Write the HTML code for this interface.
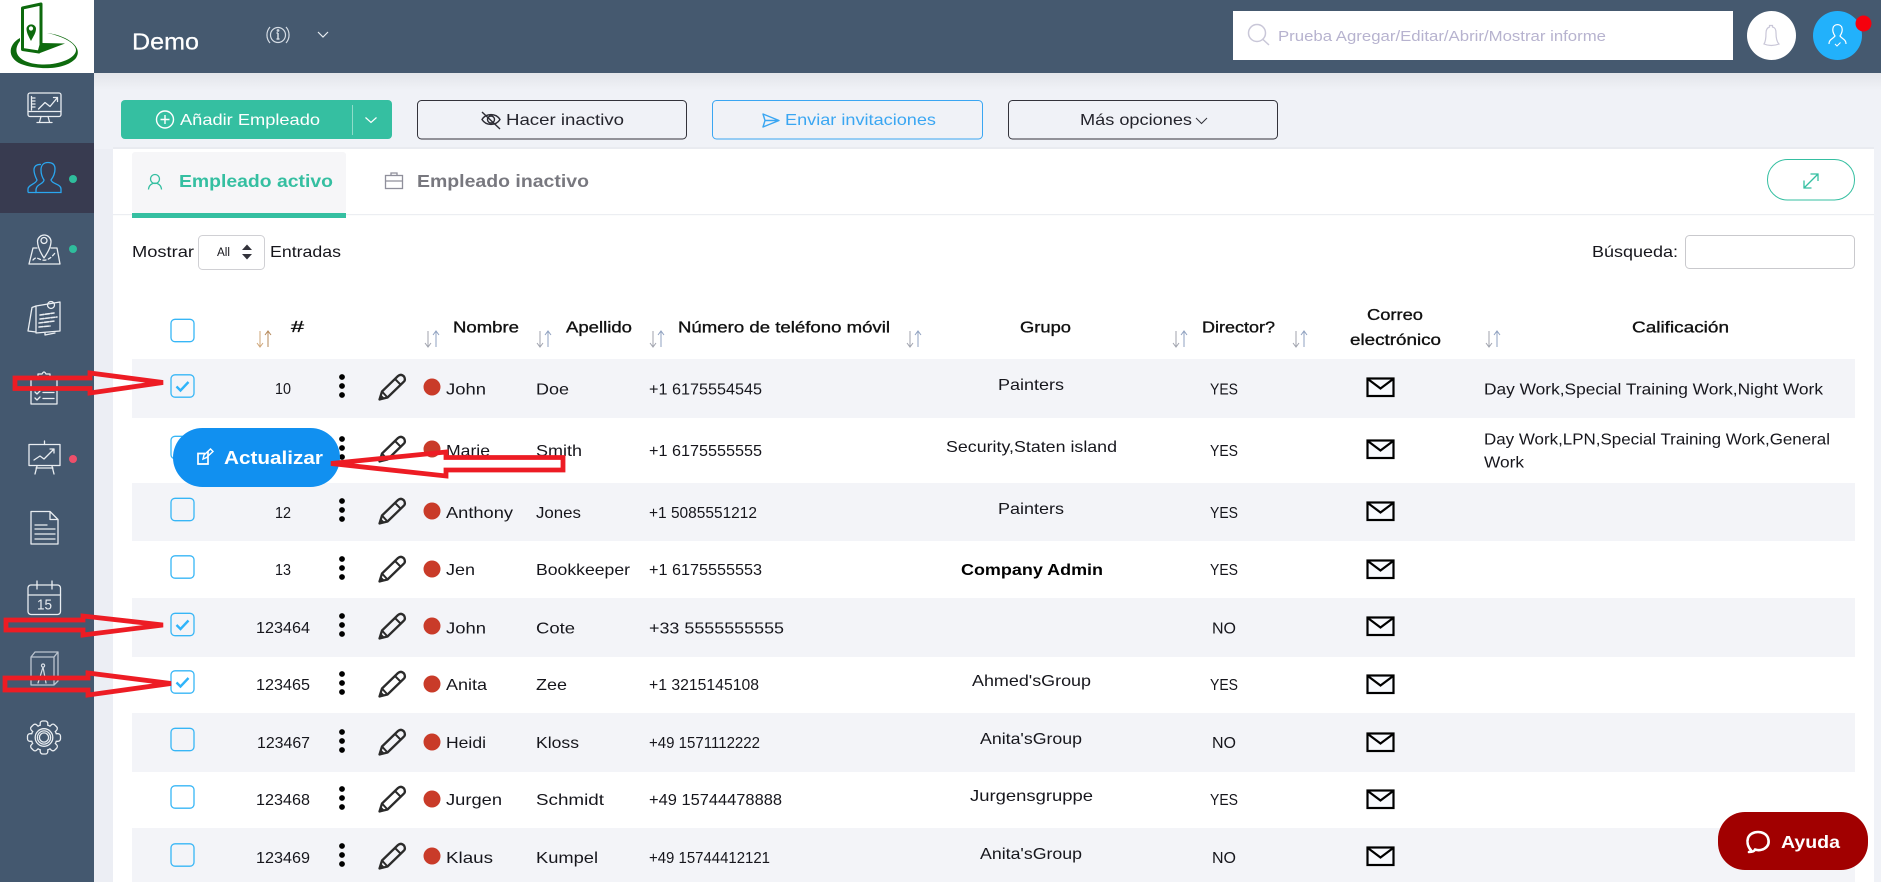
<!DOCTYPE html>
<html lang="es"><head><meta charset="utf-8"><title>Empleados</title>
<style>
html,body{margin:0;padding:0;width:1881px;height:882px;overflow:hidden;background:#f0f2f7}
svg{display:block}
text{font-family:"Liberation Sans",sans-serif;font-size:16px;fill:#16161c}
.h{stroke:#111;stroke-width:.35px;fill:#111}
.ic{fill:none;stroke:#e9edf1;stroke-width:1.3;stroke-linejoin:round;stroke-linecap:round}
.ar{fill:none;stroke:#ed1c24;stroke-width:4.800;stroke-linejoin:miter}
</style></head><body>
<svg width="1881" height="882" viewBox="0 0 1881 882" xmlns="http://www.w3.org/2000/svg">
<defs>
<linearGradient id="sh" x1="0" y1="0" x2="0" y2="1"><stop offset="0" stop-color="#e3e5ea"/><stop offset="1" stop-color="#f0f2f7"/></linearGradient>
<g id="sort" fill="none" stroke-width="1"><path d="M-4,-8V8M-7,4L-4,8L-1,4" stroke="#a0a3ae"/><path d="M4,8V-8M1,-4L4,-8L7,-4" stroke="#8fa1c0"/></g>
<g id="sort1" fill="none" stroke-width="1"><path d="M-4,-8V8M-7,4L-4,8L-1,4" stroke="#cfa77a"/><path d="M4,8V-8M1,-4L4,-8L7,-4" stroke="#b5885a"/></g>
<g id="menu" fill="#000"><circle cy="-9" r="2.900"/><circle r="2.900"/><circle cy="9" r="2.900"/></g>
<g id="pen"><path d="M-12.500,12.500L-10,4.500L6,-11Q9,-13.500 12,-10.500Q14,-7 11.500,-5L-4.500,10.500Z" fill="none" stroke="#2b2b2b" stroke-width="2.300" stroke-linejoin="round"/><path d="M3,-8L8.500,-2.500M-10,4.500L-4.500,10.500" stroke="#2b2b2b" stroke-width="2" fill="none"/><path d="M-12.500,12.500L-11,7.500L-7.500,11Z" fill="#2b2b2b"/></g>
<g id="mail"><rect x="-13" y="-8.500" width="26" height="17.500" fill="#f8fafe" stroke="#000" stroke-width="2.200"/><path d="M-12,-7.500L0,1.500L12,-7.500" fill="none" stroke="#000" stroke-width="2.200"/></g>
<circle id="rd" r="8.500" fill="#c93b29"/>
<rect id="cb" x="-11.500" y="-11.200" width="23" height="22.400" rx="4" fill="none" stroke="#37b6f6" stroke-width="1.300"/>
<path id="ck" d="M-6,0.500L-2,4.500L6,-4" fill="none" stroke="#2fb4fa" stroke-width="2.400"/>
</defs>

<!-- background -->
<rect width="1881" height="882" fill="#f0f2f7"/>
<rect x="94" y="73" width="1787" height="18" fill="url(#sh)"/>
<rect x="94" y="149" width="19" height="733" fill="#eceef4"/>
<rect x="113" y="149" width="1761" height="733" fill="#fff"/>
<rect x="113" y="147" width="1761" height="2" fill="#e9ebf0"/>

<!-- topbar -->
<rect width="1881" height="73" fill="#45596f"/>
<rect width="94" height="73" fill="#fff"/>
<!-- logo -->
<g>
<path d="M20,38C7,45 7,60 24,65C40,70 66,70 76,58C84,47 66,35 47,33C62,36 76,43 76,50C76,58 60,64.500 44,64.500C22,64.500 10,54 20,41Z" fill="#0d6a0d"/>
<path d="M22.500,8L41,4V45L39,52L22.500,49.500Z" fill="#fff" stroke="#0d6a0d" stroke-width="3" stroke-linejoin="round"/>
<path d="M31,41C28.500,36 26.500,33 26.500,28.500A4.800,4.800 0 0 1 36,28.500C36,33 33.500,36 31,41Z" fill="#0d6a0d"/><circle cx="31" cy="28.500" r="2.100" fill="#fff"/>
<path d="M42,43L65,43.500L40,53Z" fill="#0d6a0d"/>
</g>
<text x="132" y="49.500" textLength="67" lengthAdjust="spacingAndGlyphs" style="font-size:23px;fill:#fff;stroke:#fff;stroke-width:.25px">Demo</text>
<g fill="none" stroke="#d5dce4" stroke-width="1.200"><circle cx="278" cy="35" r="7.500"/><path d="M270,27A12,12 0 0 0 270,43M286,27A12,12 0 0 1 286,43"/><path d="M278,33V39M276.500,39H279.500M276.500,33H278" stroke-width="1.500"/><circle cx="278" cy="30.500" r=".8"/></g>
<path d="M318,32L323,37L328,32" fill="none" stroke="#e8edf2" stroke-width="1.200"/>
<rect x="1233" y="11" width="500" height="49" fill="#fff"/>
<circle cx="1257" cy="33" r="8.500" fill="none" stroke="#c9c7d8" stroke-width="1.500"/><path d="M1263,39.500L1269,45" stroke="#c9c7d8" stroke-width="1.500"/>
<text x="1278" y="41" textLength="328" lengthAdjust="spacingAndGlyphs" style="font-size:15px;fill:#b7b3cf">Prueba Agregar/Editar/Abrir/Mostrar informe</text>
<circle cx="1771.500" cy="35.500" r="24.500" fill="#fff"/>
<path d="M1764,44C1766,41 1766,36 1766,33C1766,29 1768,27.500 1769.500,27V25.500H1772.500V27C1775,27.500 1776,29 1776,33C1776,36 1776,41 1779,44Q1771,47 1764,44Z" fill="none" stroke="#c9c7d8" stroke-width="1.200"/>
<circle cx="1837.500" cy="35.500" r="24.500" fill="#22b1fb"/>
<path d="M1829,44C1829,39 1833,39 1835,36C1833,33 1832.500,30 1833,28C1834,23.500 1841,23.500 1842,28C1842.500,30 1842,33 1840,36C1842,39 1846,39 1846,44" fill="none" stroke="#fff" stroke-width="1.200"/><path d="M1835,44L1837,46L1840.500,42.500" fill="none" stroke="#fff" stroke-width="1"/>
<circle cx="1863.500" cy="23.500" r="8" fill="#f6000d"/>

<!-- sidebar -->
<rect y="73" width="94" height="809" fill="#44586f"/>
<rect y="143" width="94" height="70" fill="#383b50"/>
<g class="ic">
<!-- monitor -->
<rect x="28" y="93" width="33" height="23.500" rx="2"/><path d="M28,111.500H61M41,116.500L39.500,122M48,116.500L49.500,122M37,122.500H52"/><path d="M38.500,109L45,102.500L50,106.500L57.500,97.500M53.500,97.500H57.500V101.500"/><path d="M31.500,96.500V110M31.500,98H35M31.500,101H35M31.500,104H35M31.500,107H35" stroke-width="1.300"/>
<!-- map -->
<path d="M33,248L29,264H60L57,248H51M37,248H33"/><path d="M44,258C40,252 37.500,247 37.500,241A6.800,6.800 0 0 1 51,241C51,247 48,252 44,258Z"/><circle cx="44" cy="240.500" r="3"/><path d="M33,260C36,256 38,259 42,260C47,261 51,258 55,253" stroke-dasharray="3 2.500"/>
<!-- notes -->
<path d="M32,307.500L28,331L36,332L36,306ZM36,306L60,302L60,331L36,333Z"/><path d="M40,315L54,313M40,319L57,317M39,323L55,321M39,327L50,326" stroke-dasharray="4 1.500" stroke-width="1.600"/><circle cx="51" cy="305" r="3.500"/><path d="M45,333L45,335L55,333"/>
<!-- clipboard -->
<path d="M37,377H31V404H57V377H51"/><path d="M38,378V374H42Q44,370 46,374H50V378Z"/><path d="M35,392L37,394L40,391M35,398L37,400L40,397M43,392.500H54M43,398.500H54"/>
<!-- presentation -->
<rect x="29" y="444.500" width="31" height="21"/><path d="M44.500,441V444.500M37,466L35,474M52,466L54,474M36,468H53M34,460L40,456L44,459L54,449M50,449H54V453"/>
<!-- doc -->
<path d="M31,511.500H50L58,519.500V544H31ZM50,511.500V519.500H58"/><path d="M35,525H47M35,529H55M35,534H55M35,539H55"/>
<!-- calendar -->
<rect x="28" y="585" width="32.500" height="29.500" rx="3"/><path d="M28,595H60.500M37,581V589M52,581V589"/>
<!-- book -->
<path d="M31,657L35,652H58V681L54,685H31ZM31,657H54V685M54,657L58,652" stroke="#bcc5cf"/><path d="M43,664A1.600,1.600 0 1 0 43.100,664M43,667L40,677L38,683M43,667L46,683" stroke="#d8dee5" stroke-width="1.200"/>
</g>
<text x="37" y="609.500" textLength="15" lengthAdjust="spacingAndGlyphs" style="font-size:15px;fill:#e9edf1">15</text>
<!-- gear -->
<g transform="translate(44,737.500)" fill="none" stroke="#e9edf1" stroke-width="1.300">
<circle r="12.800"/>
<g fill="#44586f"><rect x="-16.500" y="-3.800" width="33" height="7.600" rx="2.500"/><rect x="-16.500" y="-3.800" width="33" height="7.600" rx="2.500" transform="rotate(45)"/><rect x="-16.500" y="-3.800" width="33" height="7.600" rx="2.500" transform="rotate(90)"/><rect x="-16.500" y="-3.800" width="33" height="7.600" rx="2.500" transform="rotate(135)"/></g>
<circle r="12.200" fill="#44586f" stroke="none"/>
<circle r="8.800"/><circle r="6.600"/><circle r="4.600"/>
</g>
<!-- people -->
<g fill="none" stroke="#2aa6ef" stroke-width="1.300"><path d="M36,192.500H61V189C61,184 52,184 51,180C54,176 55,172 55,169C55,164 52,162.500 48,162.500C43,162.500 41,166 41,170C41,174 42,177 44,180C44,184 36,184 36,190Z"/><path d="M28,192.500V189C28,185 36,184 37,180C35,176 34,173 34,170C34,166 37,164 41,164.500M28,192.500H36"/></g>
<circle cx="73" cy="179" r="4" fill="#2fbd9c"/><circle cx="73" cy="249" r="4" fill="#2fbd9c"/><circle cx="73" cy="459" r="4" fill="#ee4f6a"/>

<!-- action buttons -->
<rect x="121" y="100" width="271" height="39" rx="4" fill="#35bfa1"/>
<circle cx="165" cy="119.500" r="8.500" fill="none" stroke="#fff" stroke-width="1.400"/><path d="M165,115V124M160.500,119.500H169.500" stroke="#fff" stroke-width="1.400"/>
<text x="180" y="125" textLength="140" lengthAdjust="spacingAndGlyphs" style="fill:#fff">Añadir Empleado</text>
<rect x="352" y="105" width="1" height="30" fill="#8fdcc9"/>
<path d="M365.500,117.500L371,122.500L376.500,117.500" fill="none" stroke="#fff" stroke-width="1.200"/>
<rect x="417.500" y="100.500" width="269" height="38.500" rx="4" fill="none" stroke="#33333b" stroke-width="1"/>
<path d="M482,119.500C486,113 496,113 500,119.500C496,126 486,126 482,119.500Z" fill="none" stroke="#2c2c34" stroke-width="1.400"/><circle cx="491" cy="119.500" r="3.500" fill="none" stroke="#2c2c34" stroke-width="1.400"/><path d="M482,112L500,129" stroke="#2c2c34" stroke-width="1.400"/>
<text x="506" y="125" textLength="118" lengthAdjust="spacingAndGlyphs" style="fill:#24242c">Hacer inactivo</text>
<rect x="712.500" y="100.500" width="270" height="38.500" rx="4" fill="none" stroke="#3aa6f2" stroke-width="1"/>
<path d="M763,114L779,120.500L763,127L765,120.500Z M765,120.500H779" fill="none" stroke="#3aa6f2" stroke-width="1.400" stroke-linejoin="round"/>
<text x="785" y="125" textLength="151" lengthAdjust="spacingAndGlyphs" style="fill:#3aa6f2">Enviar invitaciones</text>
<rect x="1008.500" y="100.500" width="269" height="38.500" rx="4" fill="none" stroke="#33333b" stroke-width="1"/>
<text x="1080" y="125" textLength="112" lengthAdjust="spacingAndGlyphs" style="fill:#24242c">Más opciones</text>
<path d="M1196,118L1201.500,123.500L1207,118" fill="none" stroke="#33333b" stroke-width="1"/>

<!-- tabs -->
<rect x="113" y="214" width="1761" height="1.200" fill="#eceef2"/>
<rect x="132" y="152" width="214" height="61" rx="3" fill="#f6f6f8"/>
<rect x="132" y="213" width="214" height="5" fill="#35bfa1"/>
<g fill="none" stroke="#35bfa1" stroke-width="1.300"><circle cx="155" cy="179" r="4.500"/><path d="M148.500,189.500C149,181 161,181 161.500,189.500"/></g>
<text x="179" y="187" textLength="154" lengthAdjust="spacingAndGlyphs" style="font-weight:bold;font-size:17.500px;fill:#35bfa1">Empleado activo</text>
<g fill="none" stroke="#8f8f9b" stroke-width="1.300"><rect x="385.500" y="175.500" width="17" height="13"/><path d="M385.500,181H402.500M391,175.500V173H397V175.500"/></g>
<text x="417" y="187" textLength="172" lengthAdjust="spacingAndGlyphs" style="font-weight:bold;font-size:17.500px;fill:#78787f">Empleado inactivo</text>
<rect x="1767.500" y="159.500" width="87" height="40.500" rx="20" fill="#fff" stroke="#35bfa1" stroke-width="1"/>
<path d="M1804,188L1818,174M1810.500,174H1818V181M1804,180.500V188H1811.500" fill="none" stroke="#35bfa1" stroke-width="1.300"/>

<text x="132" y="257" textLength="62" lengthAdjust="spacingAndGlyphs">Mostrar</text>
<rect x="198.500" y="235.500" width="66" height="34" rx="4" fill="#fff" stroke="#d0d0d4" stroke-width="1"/>
<text x="217" y="256" textLength="13" lengthAdjust="spacingAndGlyphs" style="font-size:11.500px">All</text>
<path d="M242,250L247,244.500L252,250ZM242,254L247,259.500L252,254Z" fill="#33333b"/>
<text x="270" y="257" textLength="71" lengthAdjust="spacingAndGlyphs">Entradas</text>
<text x="1592" y="257" textLength="86" lengthAdjust="spacingAndGlyphs">Búsqueda:</text>
<rect x="1685.500" y="235.500" width="169" height="33" rx="4" fill="#fff" stroke="#c9c9cd" stroke-width="1"/>

<!-- table head -->
<use href="#cb" x="182.500" y="330.500"/>
<use href="#sort1" x="264" y="339"/><use href="#sort" x="432" y="339"/><use href="#sort" x="544" y="339"/><use href="#sort" x="657" y="339"/><use href="#sort" x="914" y="339"/><use href="#sort" x="1180" y="339"/><use href="#sort" x="1300" y="339"/><use href="#sort" x="1493" y="339"/>
<text class="h" x="291" y="332" textLength="13" lengthAdjust="spacingAndGlyphs">#</text>
<text class="h" x="453" y="332.500" textLength="66" lengthAdjust="spacingAndGlyphs">Nombre</text>
<text class="h" x="566" y="332.500" textLength="66" lengthAdjust="spacingAndGlyphs">Apellido</text>
<text class="h" x="678" y="332.500" textLength="212" lengthAdjust="spacingAndGlyphs">Número de teléfono móvil</text>
<text class="h" x="1020" y="332.500" textLength="51" lengthAdjust="spacingAndGlyphs">Grupo</text>
<text class="h" x="1202" y="332.500" textLength="73" lengthAdjust="spacingAndGlyphs">Director?</text>
<text class="h" x="1367" y="320" textLength="56" lengthAdjust="spacingAndGlyphs">Correo</text>
<text class="h" x="1350" y="345" textLength="91" lengthAdjust="spacingAndGlyphs">electrónico</text>
<text class="h" x="1632" y="332.500" textLength="97" lengthAdjust="spacingAndGlyphs">Calificación</text>

<!-- row backgrounds -->
<g fill="#f3f4f8"><rect x="132" y="359" width="1723" height="59"/><rect x="132" y="483" width="1723" height="58"/><rect x="132" y="598" width="1723" height="59"/><rect x="132" y="713" width="1723" height="59"/><rect x="132" y="828" width="1723" height="54"/></g>

<!-- rows -->
<use href="#cb" x="182.500" y="386"/><use href="#ck" x="182.500" y="386"/>
<text x="275" y="394" textLength="16" lengthAdjust="spacingAndGlyphs">10</text>
<use href="#menu" x="342" y="386"/><use href="#pen" x="392" y="387"/><use href="#rd" x="432" y="387"/>
<text x="446" y="394.500" textLength="40" lengthAdjust="spacingAndGlyphs">John</text>
<text x="536" y="394.500" textLength="33" lengthAdjust="spacingAndGlyphs">Doe</text>
<text x="649" y="394.500" textLength="113" lengthAdjust="spacingAndGlyphs">+1 6175554545</text>
<text x="998" y="390" textLength="66" lengthAdjust="spacingAndGlyphs">Painters</text>
<text x="1210" y="394.500" textLength="28" lengthAdjust="spacingAndGlyphs">YES</text>
<use href="#mail" x="1380.500" y="387"/>
<text x="1484" y="394.500" textLength="339" lengthAdjust="spacingAndGlyphs">Day Work,Special Training Work,Night Work</text>

<use href="#cb" x="182.500" y="447.500"/>
<text x="275" y="456" textLength="16" lengthAdjust="spacingAndGlyphs">11</text>
<use href="#menu" x="342" y="448"/><use href="#pen" x="392" y="449"/><use href="#rd" x="432" y="449"/>
<text x="446" y="456" textLength="44" lengthAdjust="spacingAndGlyphs">Marie</text>
<text x="536" y="456" textLength="46" lengthAdjust="spacingAndGlyphs">Smith</text>
<text x="649" y="456" textLength="113" lengthAdjust="spacingAndGlyphs">+1 6175555555</text>
<text x="946" y="452" textLength="171" lengthAdjust="spacingAndGlyphs">Security,Staten island</text>
<text x="1210" y="456" textLength="28" lengthAdjust="spacingAndGlyphs">YES</text>
<use href="#mail" x="1380.500" y="449"/>
<text x="1484" y="444.500" textLength="346" lengthAdjust="spacingAndGlyphs">Day Work,LPN,Special Training Work,General</text>
<text x="1484" y="467.500" textLength="40" lengthAdjust="spacingAndGlyphs">Work</text>

<use href="#cb" x="182.500" y="509.500"/>
<text x="275" y="518" textLength="16" lengthAdjust="spacingAndGlyphs">12</text>
<use href="#menu" x="342" y="510"/><use href="#pen" x="392" y="511"/><use href="#rd" x="432" y="511"/>
<text x="446" y="518" textLength="67" lengthAdjust="spacingAndGlyphs">Anthony</text>
<text x="536" y="518" textLength="45" lengthAdjust="spacingAndGlyphs">Jones</text>
<text x="649" y="518" textLength="108" lengthAdjust="spacingAndGlyphs">+1 5085551212</text>
<text x="998" y="514" textLength="66" lengthAdjust="spacingAndGlyphs">Painters</text>
<text x="1210" y="518" textLength="28" lengthAdjust="spacingAndGlyphs">YES</text>
<use href="#mail" x="1380.500" y="511"/>

<use href="#cb" x="182.500" y="567"/>
<text x="275" y="575" textLength="16" lengthAdjust="spacingAndGlyphs">13</text>
<use href="#menu" x="342" y="568"/><use href="#pen" x="392" y="569"/><use href="#rd" x="432" y="569"/>
<text x="446" y="575" textLength="29" lengthAdjust="spacingAndGlyphs">Jen</text>
<text x="536" y="575" textLength="94" lengthAdjust="spacingAndGlyphs">Bookkeeper</text>
<text x="649" y="575" textLength="113" lengthAdjust="spacingAndGlyphs">+1 6175555553</text>
<text x="961" y="575" textLength="142" lengthAdjust="spacingAndGlyphs" style="font-weight:bold;fill:#000">Company Admin</text>
<text x="1210" y="575" textLength="28" lengthAdjust="spacingAndGlyphs">YES</text>
<use href="#mail" x="1380.500" y="569"/>

<use href="#cb" x="182.500" y="624.500"/><use href="#ck" x="182.500" y="624.500"/>
<text x="256" y="633" textLength="54" lengthAdjust="spacingAndGlyphs">123464</text>
<use href="#menu" x="342" y="625"/><use href="#pen" x="392" y="626"/><use href="#rd" x="432" y="626"/>
<text x="446" y="633.500" textLength="40" lengthAdjust="spacingAndGlyphs">John</text>
<text x="536" y="633.500" textLength="39" lengthAdjust="spacingAndGlyphs">Cote</text>
<text x="649" y="633.500" textLength="135" lengthAdjust="spacingAndGlyphs">+33 5555555555</text>
<text x="1212" y="633.500" textLength="24" lengthAdjust="spacingAndGlyphs">NO</text>
<use href="#mail" x="1380.500" y="626"/>

<use href="#cb" x="182.500" y="682"/><use href="#ck" x="182.500" y="682"/>
<text x="256" y="690" textLength="54" lengthAdjust="spacingAndGlyphs">123465</text>
<use href="#menu" x="342" y="683"/><use href="#pen" x="392" y="684"/><use href="#rd" x="432" y="684"/>
<text x="446" y="690" textLength="41" lengthAdjust="spacingAndGlyphs">Anita</text>
<text x="536" y="690" textLength="31" lengthAdjust="spacingAndGlyphs">Zee</text>
<text x="649" y="690" textLength="110" lengthAdjust="spacingAndGlyphs">+1 3215145108</text>
<text x="972" y="686" textLength="119" lengthAdjust="spacingAndGlyphs">Ahmed'sGroup</text>
<text x="1210" y="690" textLength="28" lengthAdjust="spacingAndGlyphs">YES</text>
<use href="#mail" x="1380.500" y="684"/>

<use href="#cb" x="182.500" y="739.500"/>
<text x="257" y="748" textLength="53" lengthAdjust="spacingAndGlyphs">123467</text>
<use href="#menu" x="342" y="741"/><use href="#pen" x="392" y="742"/><use href="#rd" x="432" y="742"/>
<text x="446" y="748" textLength="40" lengthAdjust="spacingAndGlyphs">Heidi</text>
<text x="536" y="748" textLength="43" lengthAdjust="spacingAndGlyphs">Kloss</text>
<text x="649" y="748" textLength="111" lengthAdjust="spacingAndGlyphs">+49 1571112222</text>
<text x="980" y="744" textLength="102" lengthAdjust="spacingAndGlyphs">Anita'sGroup</text>
<text x="1212" y="748" textLength="24" lengthAdjust="spacingAndGlyphs">NO</text>
<use href="#mail" x="1380.500" y="742"/>

<use href="#cb" x="182.500" y="797"/>
<text x="256" y="805" textLength="54" lengthAdjust="spacingAndGlyphs">123468</text>
<use href="#menu" x="342" y="798"/><use href="#pen" x="392" y="799"/><use href="#rd" x="432" y="799"/>
<text x="446" y="805" textLength="56" lengthAdjust="spacingAndGlyphs">Jurgen</text>
<text x="536" y="805" textLength="68" lengthAdjust="spacingAndGlyphs">Schmidt</text>
<text x="649" y="805" textLength="133" lengthAdjust="spacingAndGlyphs">+49 15744478888</text>
<text x="970" y="801" textLength="123" lengthAdjust="spacingAndGlyphs">Jurgensgruppe</text>
<text x="1210" y="805" textLength="28" lengthAdjust="spacingAndGlyphs">YES</text>
<use href="#mail" x="1380.500" y="799"/>

<use href="#cb" x="182.500" y="855"/>
<text x="256" y="863" textLength="54" lengthAdjust="spacingAndGlyphs">123469</text>
<use href="#menu" x="342" y="855"/><use href="#pen" x="392" y="856"/><use href="#rd" x="432" y="856"/>
<text x="446" y="863" textLength="47" lengthAdjust="spacingAndGlyphs">Klaus</text>
<text x="536" y="863" textLength="62" lengthAdjust="spacingAndGlyphs">Kumpel</text>
<text x="649" y="863" textLength="121" lengthAdjust="spacingAndGlyphs">+49 15744412121</text>
<text x="980" y="859" textLength="102" lengthAdjust="spacingAndGlyphs">Anita'sGroup</text>
<text x="1212" y="863" textLength="24" lengthAdjust="spacingAndGlyphs">NO</text>
<use href="#mail" x="1380.500" y="856"/>

<!-- actualizar pill -->
<rect x="173" y="428" width="167" height="59" rx="29.500" fill="#1190f0"/>
<path d="M208,451V464H198V453.500H205" fill="none" stroke="#fff" stroke-width="1.700"/><path d="M203,459L204,455L210.500,449L213,451.500L206.500,457.500Z" fill="none" stroke="#fff" stroke-width="1.400"/>
<text x="224" y="464" textLength="99" lengthAdjust="spacingAndGlyphs" style="font-weight:bold;font-size:18.500px;fill:#fff">Actualizar</text>

<!-- arrows -->
<path class="ar" d="M15,378H90V373L163,382.500L90,393V388.500H15Z"/>
<path class="ar" d="M6,620H83V616L163,625L83,635V630H6Z"/>
<path class="ar" d="M5,678H88V673L171,683.500L88,695V690H5Z"/>
<path class="ar" d="M331,463.500L446,452V457.500H563V470H446V476Z"/>

<!-- help -->
<rect x="1718" y="812" width="150" height="58" rx="27" fill="#a10000"/>
<path d="M1751.500,851C1747,846 1747,841 1748,838C1751,830 1765,830 1768,838C1771,847 1762,852 1755,849.500C1754.500,851 1753,852 1749,852C1750.500,852 1751.500,851.500 1751.500,851Z" fill="none" stroke="#fff" stroke-width="2.600" stroke-linejoin="round"/>
<text x="1781" y="848" textLength="59" lengthAdjust="spacingAndGlyphs" style="font-weight:bold;font-size:17.500px;fill:#fff">Ayuda</text>
</svg>
</body></html>
